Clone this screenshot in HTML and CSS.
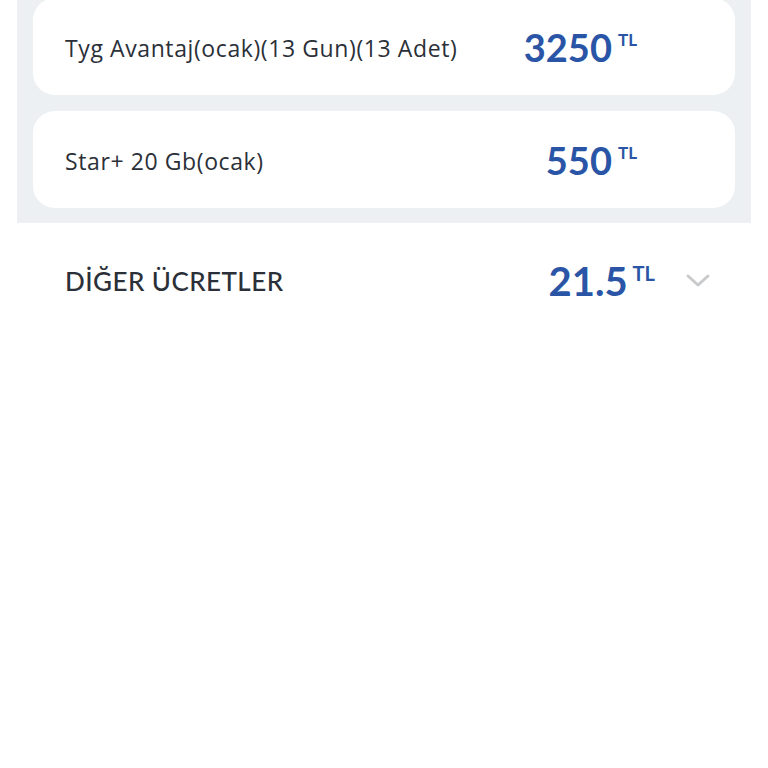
FILE: index.html
```html
<!DOCTYPE html>
<html lang="tr">
<head>
<meta charset="utf-8">
<link rel="stylesheet" href="styles.css">
</head>
<body>
<div class="panel">
  <div class="card first">
    <span class="label">Tyg Avantaj(ocak)(13 Gun)(13 Adet)</span>
    <span class="price"><span class="num">3250</span><span class="cur">TL</span></span>
  </div>
  <div class="card">
    <span class="label">Star+ 20 Gb(ocak)</span>
    <span class="price"><span class="num">550</span><span class="cur">TL</span></span>
  </div>
</div>
<div class="other">
  <span class="other-label">DİĞER ÜCRETLER</span>
  <span class="price big"><span class="num">21.5</span><span class="cur">TL</span></span>
  <svg class="chev" width="26" height="16" viewBox="0 0 26 16"><path d="M3 3 L13 12 L23 3" fill="none" stroke="#c9cacc" stroke-width="3" stroke-linecap="round" stroke-linejoin="round"/></svg>
</div>
</body>
</html>
```

FILE: styles.css
```css
html, body {
  margin: 0;
  padding: 0;
  background: #ffffff;
  font-family: "Lato", "Noto Sans", sans-serif;
  color: #2b3038;
}
.panel {
  margin: -2px 17px 0;
  padding: 0 16px 15px;
  background: #edf0f3;
  display: flex;
  flex-direction: column;
  gap: 16px;
}
.card {
  background: #ffffff;
  border-radius: 22px;
  height: 97px;
  display: flex;
  align-items: center;
  padding: 0 98px 0 32px;
}
.label {
  flex: 1;
  font-family: "Open Sans", "Lato", sans-serif;
  font-size: 23px;
  font-weight: 400;
  letter-spacing: 0.6px;
  color: #2b3038;
  margin-top: 2px;
}
.price {
  display: flex;
  align-items: flex-start;
  color: #2a55a6;
  font-weight: 700;
}
.num {
  font-size: 38px;
  line-height: 40px;
}
.cur {
  font-size: 17px;
  line-height: 17px;
  margin-left: 6px;
  margin-top: 4px;
}
.other {
  display: flex;
  align-items: center;
  padding: 30px 57px 0 65px;
  height: 55px;
}
.other-label {
  flex: 1;
  font-size: 26px;
  font-weight: 500;
  letter-spacing: 0.45px;
  color: #2b3038;
}
.big .num {
  font-size: 40px;
  line-height: 44px;
}
.big .cur {
  font-size: 20px;
  line-height: 20px;
  margin-left: 5px;
  margin-top: 4px;
}
.chev {
  margin-left: 30px;
}
```
